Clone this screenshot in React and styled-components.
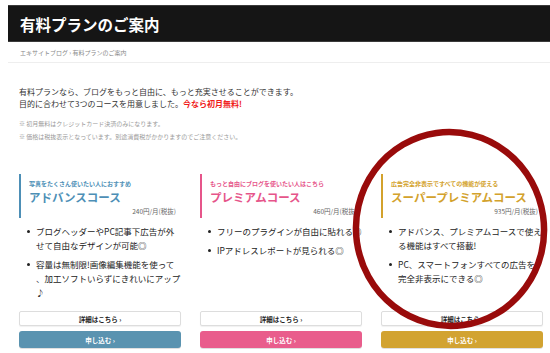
import React from "react";
import styled, { createGlobalStyle } from "styled-components";

const GlobalStyle = createGlobalStyle`
  html, body {
    margin: 0;
    padding: 0;
    background: #fff;
  }
  body {
    font-family: "Noto Sans CJK JP", "Noto Sans", sans-serif;
    color: #333;
  }
`;

const courses = [
  {
    key: "advance",
    color: "#4d8fb6",
    button: "#5a93b0",
    lead: "写真をたくさん使いたい人におすすめ",
    title: "アドバンスコース",
    price: "240円/月(税抜)",
    points: [
      ["ブログヘッダーやPC記事下広告が外", "せて自由なデザインが可能◎"],
      ["容量は無制限!画像編集機能を使って", "、加工ソフトいらずにきれいにアップ", "♪"],
    ],
  },
  {
    key: "premium",
    color: "#e6558a",
    button: "#e95d8c",
    lead: "もっと自由にブログを使いたい人はこちら",
    title: "プレミアムコース",
    price: "460円/月(税抜)",
    points: [["フリーのプラグインが自由に貼れる◎"], ["IPアドレスレポートが見られる◎"]],
  },
  {
    key: "super",
    color: "#d3a22c",
    button: "#d2a331",
    lead: "広告完全非表示ですべての機能が使える",
    title: "スーパープレミアムコース",
    price: "935円/月(税抜)",
    points: [
      ["アドバンス、プレミアムコースで使え", "る機能はすべて搭載!"],
      ["PC、スマートフォンすべての広告を", "完全非表示にできる◎"],
    ],
  },
];

const Page = styled.div`
  position: relative;
  width: 550px;
  height: 353px;
  overflow: hidden;
  padding: 5px 0 0 8px;
  box-sizing: border-box;
`;

const TitleBar = styled.header`
  height: 37px;
  box-sizing: border-box;
  background: #151515;
  border-top: 1px solid #3a3a3a;
  border-bottom: 1px solid #3a3a3a;
  display: flex;
  align-items: center;
  padding-left: 12px;

  h1 {
    margin: 0;
    font-size: 15.5px;
    font-weight: 700;
    color: #fff;
    letter-spacing: 0;
  }
`;

const Breadcrumb = styled.nav`
  height: 20px;
  display: flex;
  align-items: center;
  padding-left: 12px;
  font-size: 6px;
  color: #888;
  border-bottom: 1px solid #eee;
`;

const Content = styled.main`
  padding: 23px 7px 0 11px;
`;

const Intro = styled.p`
  margin: 0;
  font-size: 8px;
  line-height: 12px;
  color: #333;

  strong {
    color: #f01a1a;
    font-weight: 700;
  }
`;

const Notes = styled.div`
  margin-top: 7px;
  font-size: 6px;
  line-height: 13px;
  color: #999;
`;

const Courses = styled.div`
  margin-top: 31px;
  display: grid;
  grid-template-columns: repeat(3, 162px);
  column-gap: 19px;
`;

const Card = styled.section`
  display: flex;
  flex-direction: column;
`;

const CardHead = styled.div`
  border-left: 2.5px solid ${(p) => p.$color};
  padding: 5px 5px 2px 8px;
  color: ${(p) => p.$color};

  .lead {
    font-size: 6px;
    line-height: 9px;
    font-weight: 700;
  }

  .title {
    margin: 1px 0 0;
    font-size: 11.5px;
    line-height: 16px;
    font-weight: 700;
  }

  .price {
    margin-top: 1px;
    text-align: right;
    font-size: 6.5px;
    line-height: 10px;
    color: #666;
  }
`;

const Points = styled.ul`
  list-style: none;
  margin: 6px 0 0;
  padding: 0 0 0 17px;

  li {
    position: relative;
    font-size: 8.5px;
    line-height: 14px;
    color: #222;
    margin-bottom: 5px;
  }

  li::before {
    content: "";
    position: absolute;
    left: -9px;
    top: 5.5px;
    width: 3px;
    height: 3px;
    border-radius: 50%;
    background: #222;
  }
`;

const Actions = styled.div`
  margin-top: auto;
  padding-top: 7px;
  display: flex;
  flex-direction: column;
  gap: 5px;
`;

const DetailButton = styled.a`
  height: 15px;
  box-sizing: border-box;
  border: 1.5px solid #ddd;
  border-radius: 2px;
  background: #fff;
  box-shadow: 0 1px 1px rgba(0, 0, 0, 0.06);
  display: flex;
  align-items: center;
  justify-content: center;
  font-size: 6.5px;
  font-weight: 700;
  color: #222;
`;

const ApplyButton = styled.a`
  height: 17px;
  border-radius: 3px;
  background: ${(p) => p.$color};
  box-shadow: 0 1px 0 rgba(0, 0, 0, 0.12);
  display: flex;
  align-items: center;
  justify-content: center;
  font-size: 6.5px;
  font-weight: 700;
  color: #fff;
`;

const Circle = styled.svg`
  position: absolute;
  left: 0;
  top: 0;
  pointer-events: none;
`;

const App = () => {
  return (
    <Page>
      <GlobalStyle />
      <TitleBar>
        <h1>有料プランのご案内</h1>
      </TitleBar>
      <Breadcrumb>エキサイトブログ › 有料プランのご案内</Breadcrumb>
      <Content>
        <Intro>
          有料プランなら、ブログをもっと自由に、もっと充実させることができます。
          <br />
          目的に合わせて3つのコースを用意しました。<strong>今なら初月無料!</strong>
        </Intro>
        <Notes>
          ※ 初月無料はクレジットカード決済のみになります。
          <br />※ 価格は税抜表示となっています。別途消費税がかかりますのでご注意ください。
        </Notes>
        <Courses>
          {courses.map((course) => (
            <Card key={course.key}>
              <CardHead $color={course.color}>
                <div className="lead">{course.lead}</div>
                <h2 className="title">{course.title}</h2>
                <div className="price">{course.price}</div>
              </CardHead>
              <Points>
                {course.points.map((lines, i) => (
                  <li key={i}>
                    {lines.map((line, j) => (
                      <React.Fragment key={j}>
                        {j > 0 && <br />}
                        {line}
                      </React.Fragment>
                    ))}
                  </li>
                ))}
              </Points>
              <Actions>
                <DetailButton>詳細はこちら ›</DetailButton>
                <ApplyButton $color={course.button}>申し込む ›</ApplyButton>
              </Actions>
            </Card>
          ))}
        </Courses>
      </Content>
      <Circle width="550" height="353" viewBox="0 0 550 353">
        <ellipse
          cx="450"
          cy="229"
          rx="94"
          ry="97"
          transform="rotate(-8 450 229)"
          fill="none"
          stroke="#990b0b"
          strokeWidth="6.5"
        />
      </Circle>
    </Page>
  );
};

export default App;
